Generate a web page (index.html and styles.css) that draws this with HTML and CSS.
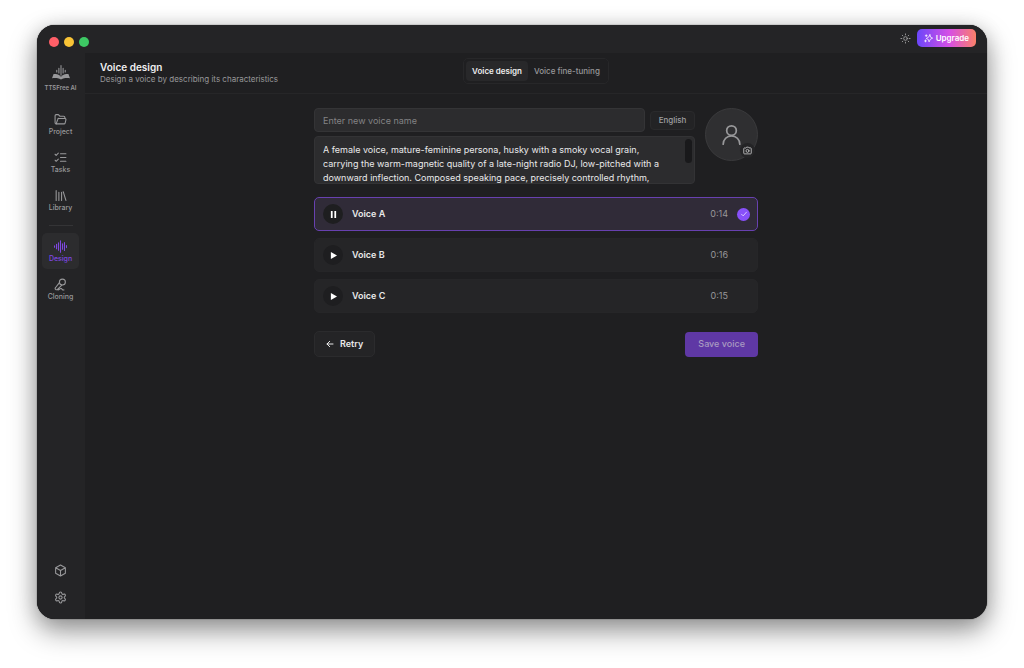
FILE: index.html
```html
<!DOCTYPE html>
<html lang="en">
<head>
<meta charset="utf-8">
<meta name="viewport" content="width=device-width, initial-scale=1">
<title>TTSFree AI</title>
<link rel="stylesheet" href="styles.css">
</head>
<body>
<div class="window">
  <header class="titlebar">
    <div class="lights">
      <button class="light light-close" aria-label="Close"></button>
      <button class="light light-min" aria-label="Minimize"></button>
      <button class="light light-max" aria-label="Zoom"></button>
    </div>
    <div class="titlebar-actions">
      <button class="theme" aria-label="Toggle theme">
        <svg class="icon icon-sm" viewBox="0 0 24 24"><circle cx="12" cy="12" r="4"/><path d="M12 2v2M12 20v2M4.9 4.9l1.4 1.4M17.7 17.7l1.4 1.4M2 12h2M20 12h2M6.3 17.7l-1.4 1.4M19.1 4.9l-1.4 1.4"/></svg>
      </button>
      <button class="upgrade">
        <svg class="icon icon-spark" viewBox="0 0 24 24"><path d="M16 2l1.500 6.500L23 11l-6 3-3.500 7-2-6.500L6 12l6-3.500z"/><path d="M6 2v5M3.500 4.500h5M4 16v5M1.500 18.500h5"/></svg>
        Upgrade
      </button>
    </div>
  </header>

  <div class="body">
    <nav class="sidebar">
      <div class="brand">
        <svg class="brand-logo" viewBox="0 0 34 28"><path class="bars" d="M9 10v3M13 6v9M17 1v18M21 6v9M25 10v3"/><path class="book" d="M3 17c6-1 10 0 14 5 4-5 8-6 14-5l3 8c-6-1-11-.5-17 2-6-2.500-11-3-17-2z"/></svg>
        <span>TTSFree AI</span>
      </div>
      <a class="nav-item" href="#project">
        <svg class="icon" viewBox="0 0 24 24"><path d="M4 20a2 2 0 0 1-2-2V5a2 2 0 0 1 2-2h4l3 3h7a2 2 0 0 1 2 2v2"/><path d="M4 20l3-8.500A2 2 0 0 1 9 10h11a2 2 0 0 1 2 2.500l-1.500 6A2 2 0 0 1 18.500 20z"/></svg>
        <span>Project</span>
      </a>
      <a class="nav-item" href="#tasks">
        <svg class="icon" viewBox="0 0 24 24"><path d="M2 6l2 2 4-4M2 17l2 2 4-4M12 5h10M12 12h10M12 19h10"/></svg>
        <span>Tasks</span>
      </a>
      <a class="nav-item" href="#library">
        <svg class="icon" viewBox="0 0 24 24"><path d="M4 3v18M9 6v15M14 6v15M17 5l5 16"/></svg>
        <span>Library</span>
      </a>
      <hr class="divider">
      <a class="nav-item active" href="#design" aria-current="page">
        <svg class="icon" viewBox="0 0 24 24"><path d="M1 10.500v3M4.700 8v8M8.300 5v14M12 1.500v21M15.700 7v10M19.300 4.500v15M23 10v4"/></svg>
        <span>Design</span>
      </a>
      <a class="nav-item" href="#cloning">
        <svg class="icon" viewBox="0 0 24 24"><circle cx="15.500" cy="7.500" r="5.500"/><path d="M10 8.500L3 17.500A2.300 2.300 0 0 0 6.500 21L14.500 13M6.300 21.500c3 2 4-3 7-2 2 .7 2 3.500 5 2.500"/></svg>
        <span>Cloning</span>
      </a>
      <div class="sidebar-foot">
        <button class="foot-btn" aria-label="Models"><svg class="icon" viewBox="0 0 24 24"><path d="M12 2l9 5v10l-9 5-9-5V7zM3 7l9 5 9-5M12 12v10"/></svg></button>
        <button class="foot-btn" aria-label="Settings"><svg class="icon" viewBox="0 0 24 24"><path d="M9.700 4.100a2.300 2.300 0 0 1 4.600 0 2.300 2.300 0 0 0 3.300 1.900 2.300 2.300 0 0 1 2.300 4 2.300 2.300 0 0 0 0 3.900 2.300 2.300 0 0 1-2.300 4 2.300 2.300 0 0 0-3.300 1.900 2.300 2.300 0 0 1-4.600 0 2.300 2.300 0 0 0-3.300-1.900 2.300 2.300 0 0 1-2.300-4 2.300 2.300 0 0 0 0-3.900 2.300 2.300 0 0 1 2.300-4 2.300 2.300 0 0 0 3.300-1.900z"/><circle cx="12" cy="12" r="3"/></svg></button>
      </div>
    </nav>

    <main class="main">
      <div class="page-head">
        <div class="heading">
          <h1>Voice design</h1>
          <p>Design a voice by describing its characteristics</p>
        </div>
        <div class="tabs" role="tablist">
          <button class="tab selected" role="tab" aria-selected="true">Voice design</button>
          <button class="tab" role="tab" aria-selected="false">Voice fine-tuning</button>
        </div>
      </div>

      <form class="content">
        <div class="profile">
          <div class="fields">
            <div class="name-row">
              <input class="name" type="text" placeholder="Enter new voice name" aria-label="Voice name">
              <button class="lang" type="button">English</button>
            </div>
            <div class="prompt">
              <textarea class="prompt-text" rows="3" aria-label="Voice description">A female voice, mature-feminine persona, husky with a smoky vocal grain,
carrying the warm-magnetic quality of a late-night radio DJ, low-pitched with a
downward inflection. Composed speaking pace, precisely controlled rhythm,</textarea>
              <span class="thumb"></span>
            </div>
          </div>
          <button class="avatar" type="button" aria-label="Change picture">
            <svg class="icon avatar-person" viewBox="0 0 24 24"><circle cx="12" cy="7.500" r="5.500"/><path d="M2.500 23a9.500 9.500 0 0 1 19 0"/></svg>
            <span class="camera"><svg class="icon icon-cam" viewBox="0 0 24 24"><path d="M8 5l1.500-2h5L16 5h4a2 2 0 0 1 2 2v12a2 2 0 0 1-2 2H4a2 2 0 0 1-2-2V7a2 2 0 0 1 2-2z"/><circle cx="12" cy="13" r="4"/></svg></span>
          </button>
        </div>

        <div class="voices">
          <div class="voice chosen">
            <button class="play" type="button" aria-label="Pause Voice A"><svg class="glyph" viewBox="0 0 8 8"><path d="M1 0h2v8H1zM5 0h2v8H5z"/></svg></button>
            <span class="voice-name">Voice A</span>
            <span class="time">0:14</span>
            <span class="mark"><svg class="icon" viewBox="0 0 24 24"><path d="M6 12.500l4 4 8-9"/></svg></span>
          </div>
          <div class="voice">
            <button class="play" type="button" aria-label="Play Voice B"><svg class="glyph" viewBox="0 0 8 8"><path d="M1 0l7 4-7 4z"/></svg></button>
            <span class="voice-name">Voice B</span>
            <span class="time">0:16</span>
          </div>
          <div class="voice">
            <button class="play" type="button" aria-label="Play Voice C"><svg class="glyph" viewBox="0 0 8 8"><path d="M1 0l7 4-7 4z"/></svg></button>
            <span class="voice-name">Voice C</span>
            <span class="time">0:15</span>
          </div>
        </div>

        <div class="actions">
          <button class="retry" type="button"><svg class="icon icon-back" viewBox="0 0 24 24"><path d="M21 12H3M11 4l-8 8 8 8"/></svg>Retry</button>
          <button class="save" type="submit" disabled>Save voice</button>
        </div>
      </form>
    </main>
  </div>
</div>
</body>
</html>
```
FILE: styles.css
```css
* { box-sizing: border-box; }

body {
  margin: 0;
  padding: 25px 37px 49px;
  min-height: 100vh;
  display: flex;
  background: #fff;
  color: #e9e9ea;
  font: 9px/14px Inter, "Liberation Sans", sans-serif;
}

button, input, textarea { font: inherit; color: inherit; margin: 0; }
button { border: 0; padding: 0; background: none; display: flex; align-items: center; justify-content: center; }

.icon {
  width: 13px;
  height: 13px;
  fill: none;
  stroke: currentColor;
  stroke-width: 2;
  stroke-linecap: round;
  stroke-linejoin: round;
  flex: none;
}

.window {
  flex: 1;
  display: flex;
  flex-direction: column;
  border-radius: 18px;
  overflow: hidden;
  background: #1f1f21;
  box-shadow: 0 0 1px #000, 0 12px 28px rgba(0, 0, 0, .4), 0 2px 20px rgba(0, 0, 0, .14);
}

.titlebar {
  height: 28px;
  padding: 0 11px 0 12px;
  display: flex;
  align-items: center;
  justify-content: space-between;
  background: #242426;
}
.lights { display: flex; gap: 5px; padding-top: 6px; }
.light { width: 10px; height: 10px; border-radius: 50%; }
.light-close { background: #ff5f68; }
.light-min { background: #f9c436; }
.light-max { background: #3dc864; }
.titlebar-actions { display: flex; align-items: center; gap: 6px; padding-bottom: 2px; }
.theme { color: #9b9b9d; }
.icon-sm { width: 11px; height: 11px; }
.icon-spark { width: 9px; height: 9px; }
.upgrade {
  height: 18px;
  padding: 0 7px;
  gap: 3px;
  border-radius: 5px;
  color: #fff;
  font-size: 8px;
  font-weight: 600;
  background: linear-gradient(90deg, #6b46fa, #d64fe5 55%, #fb8069);
}

.body { flex: 1; display: flex; }

.sidebar {
  width: 48px;
  padding: 12px 6px 13px 5px;
  display: flex;
  flex-direction: column;
  align-items: stretch;
  gap: 2px;
  background: #242426;
  color: #98989a;
  font-size: 7px;
  line-height: 8px;
  font-weight: 500;
}
.brand {
  display: flex;
  flex-direction: column;
  align-items: center;
  gap: 4px;
  margin-bottom: 12px;
  font-size: 6px;
  font-weight: 600;
  white-space: nowrap;
}
.brand-logo { width: 18px; height: 15px; }
.bars { fill: none; stroke: currentColor; stroke-width: 2; stroke-linecap: round; }
.book { fill: currentColor; }
.nav-item {
  height: 36px;
  display: flex;
  flex-direction: column;
  align-items: center;
  justify-content: center;
  gap: 2px;
  border-radius: 5px;
  color: inherit;
  text-decoration: none;
}
.nav-item.active { background: #2c2c2e; color: #7e47e0; }
.divider { width: 24px; height: 1px; margin: 5px auto; border: 0; background: #343436; }
.sidebar-foot { margin-top: auto; display: flex; flex-direction: column; align-items: center; gap: 9px; }
.foot-btn { width: 18px; height: 18px; }

.main { flex: 1; display: flex; flex-direction: column; min-width: 0; }
.page-head {
  height: 41px;
  padding: 0 15px 2px;
  display: grid;
  grid-template-columns: 1fr auto 1fr;
  align-items: center;
  border-bottom: 1px solid #262628;
}
h1 { margin: 0; font-size: 10px; line-height: 14px; font-weight: 600; color: #efeff0; }
.heading p { margin: 0; font-size: 8px; line-height: 10px; color: #98989a; }
.tabs {
  display: flex;
  padding: 2px;
  margin-top: -2px;
  border: 1px solid #272729;
  border-radius: 5px;
}
.tab { height: 20px; padding: 0 6px; border-radius: 4px; font-size: 8px; font-weight: 500; color: #98989a; }
.tab.selected { background: #28282a; color: #efeff0; font-weight: 600; }

.content { width: 100%; max-width: 444px; margin: 0 auto; padding-top: 14px; }
.profile { display: flex; gap: 10px; align-items: flex-start; }
.fields { flex: 1; display: flex; flex-direction: column; gap: 4px; }
.name-row { display: flex; align-items: center; gap: 5px; }
.name {
  flex: 1;
  min-width: 0;
  height: 24px;
  padding: 0 8px;
  border: 1px solid #343436;
  border-radius: 4px;
  background: #2c2c2e;
}
.name::placeholder { color: #838385; opacity: 1; }
.lang {
  width: 45px;
  height: 19px;
  border: 1px solid #2a2a2c;
  border-radius: 4px;
  background: #232325;
  color: #a0a0a2;
  font-size: 8px;
  font-weight: 500;
}
.prompt {
  position: relative;
  padding: 6px 8px 0;
  height: 48px;
  border: 1px solid #333335;
  border-radius: 4px;
  background: #2c2c2e;
}
.prompt-text {
  display: block;
  width: 100%;
  height: 42px;
  padding: 0;
  border: 0;
  background: none;
  resize: none;
  overflow: hidden;
  white-space: pre;
}
.thumb { position: absolute; top: 2px; right: 2px; width: 7px; height: 24px; border-radius: 4px; background: #19191b; }
.avatar {
  position: relative;
  width: 53px;
  height: 53px;
  border: 1px solid #3a3a3c;
  border-radius: 50%;
  background: #2f2f31;
  color: #98989a;
}
.avatar-person { width: 21px; height: 21px; stroke-width: 2; }
.camera {
  position: absolute;
  right: 2px;
  bottom: 2px;
  width: 15px;
  height: 15px;
  display: flex;
  align-items: center;
  justify-content: center;
  border-radius: 50%;
  background: #242426;
  color: #d8d8da;
}
.icon-cam { width: 9px; height: 9px; }

.voices { margin-top: 13px; display: flex; flex-direction: column; gap: 7px; }
.voice {
  height: 34px;
  padding: 0 29px 0 8px;
  display: flex;
  align-items: center;
  gap: 9px;
  border: 1px solid #262628;
  border-radius: 5px;
  background: #252527;
}
.voice.chosen { padding-right: 7px; border-color: #6841b0; background: #302b38; }
.play { width: 20px; height: 20px; border-radius: 50%; background: #1e1e20; }
.glyph { width: 7px; height: 7px; fill: #fff; }
.voice-name { flex: 1; font-weight: 600; }
.time { color: #98989a; }
.mark {
  width: 13px;
  height: 13px;
  display: flex;
  align-items: center;
  justify-content: center;
  border-radius: 50%;
  background: #8850fa;
  color: #e6daff;
}
.mark .icon { width: 10px; height: 10px; }

.actions { margin-top: 18px; display: flex; align-items: center; justify-content: space-between; }
.retry {
  height: 26px;
  padding: 0 11px;
  gap: 6px;
  border: 1px solid #2b2b2d;
  border-radius: 5px;
  background: #242426;
  font-weight: 600;
}
.icon-back { width: 8px; height: 8px; stroke-width: 3; }
.save { height: 25px; padding: 0 13px; border-radius: 4px; background: #5f38a5; color: #a99bc2; font-weight: 500; }
```
